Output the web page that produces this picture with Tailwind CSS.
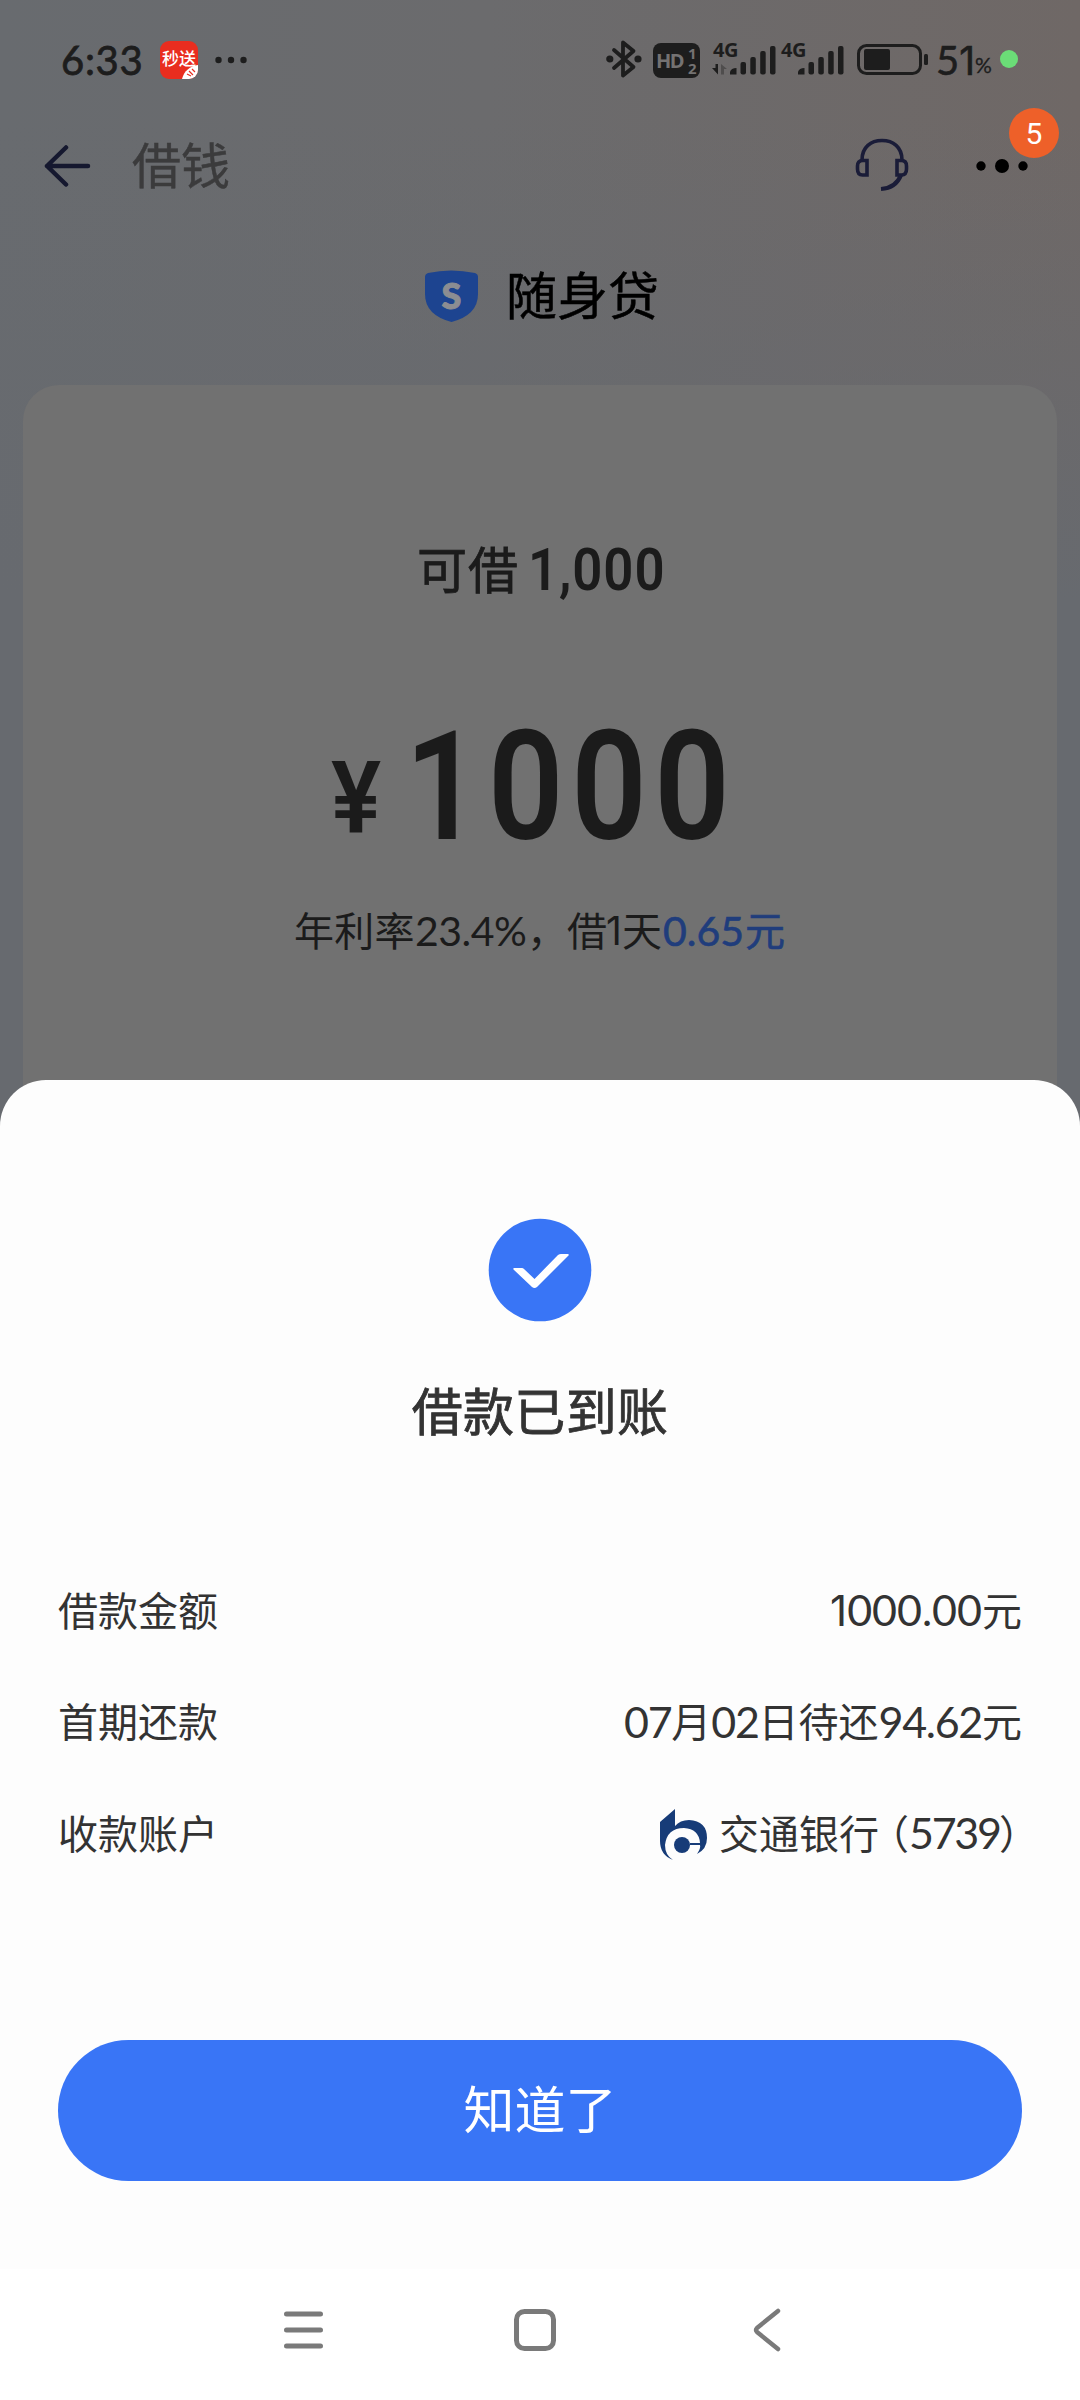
<!DOCTYPE html>
<html lang="zh-CN">
<head>
<meta charset="utf-8">
<title>借钱</title>
<script src="https://cdn.jsdelivr.net/npm/@tailwindcss/browser@4"></script>
</head>
<body class="bg-white">
<div class="relative w-[1080px] h-[2400px] overflow-hidden bg-[linear-gradient(180deg,transparent_0px,transparent_120px,#676a6f_600px),linear-gradient(90deg,#686b6f_0%,#6b6b6d_45%,#6f6866_100%)] font-['Lato','Noto_Sans_CJK_SC',sans-serif] text-[#333] flex flex-col">

  <!-- status bar -->
  <header class="h-[120px] shrink-0 flex items-center pl-[61px] text-[#1d1d1d]">
    <span class="w-[99px] text-[40px] leading-none tracking-[0.7px] [-webkit-text-stroke:0.8px_#1d1d1d]">6:33</span>
    <span class="relative w-[38px] h-[38px] rounded-[9px] bg-[#e92d1f] overflow-hidden">
      <span class="absolute left-[2px] top-[9px] w-[36px] text-[17px] leading-[17px] font-medium text-white whitespace-nowrap">秒送</span>
      <svg class="absolute right-0 bottom-0" width="16" height="15" viewBox="0 0 16 15"><path d="M0 15C2 7 8 2 16 1V9C15 12 13 15 9 15Z" fill="#fff"/><path d="M5 10l4 2M7 7l4 4M10 5l3 3" stroke="#e92d1f" stroke-width="1.200"/></svg>
    </span>
    <svg class="ml-[17px]" width="34" height="8" viewBox="0 0 34 8" fill="#1d1d1d"><circle cx="3.500" cy="4" r="3.200"/><circle cx="16" cy="4" r="3.200"/><circle cx="28.500" cy="4" r="3.200"/></svg>
    <svg class="ml-[357px] -mt-[2px]" width="36" height="40" viewBox="0 0 36 40" fill="none" stroke="#1d1d1d" stroke-width="3.800" stroke-linejoin="round" stroke-linecap="round"><path d="M8 11L27.500 28L17 36.500V3.500L27.500 12L8 29"/><circle cx="3.800" cy="20" r="1.700"/><circle cx="32" cy="20" r="1.700"/></svg>
    <span class="relative ml-[11px] w-[47px] h-[35px] rounded-[8px] bg-[#1d1d1d] text-[#747272] font-['Open_Sans'] font-bold">
      <span class="absolute left-[3px] top-[8px] text-[20px] leading-[20px] tracking-[-1.500px]">HD</span>
      <span class="absolute left-[35px] top-[3px] text-[15px] leading-[15px]">1</span>
      <span class="absolute left-[35px] top-[18px] text-[15px] leading-[15px]">2</span>
    </span>
    <span class="relative ml-[12px] w-[66px] h-[36px]">
      <span class="absolute left-[1px] top-[-1px] font-['Open_Sans'] text-[20px] leading-[18px] font-bold tracking-[-0.500px]">4G</span>
      <svg class="absolute left-0 top-0" width="66" height="36" viewBox="0 0 66 36" fill="#1d1d1d"><path d="M6 22V32.500L0 26H3.500V22Z"/><path d="M9 32.500V22L15 27H12V32.500Z" fill="#4f4d4d"/><path d="M18 32.500V30Q19 26 24.500 26V32.500Z"/><rect x="28.500" y="20" width="5.500" height="12.500" rx="2"/><rect x="38.300" y="15" width="5.500" height="17.500" rx="2"/><rect x="48.200" y="9" width="5.500" height="23.500" rx="2"/><rect x="58" y="4" width="5.500" height="28.500" rx="2"/></svg>
    </span>
    <span class="relative ml-[2px] w-[66px] h-[36px]">
      <span class="absolute left-[1px] top-[-1px] font-['Open_Sans'] text-[20px] leading-[18px] font-bold tracking-[-0.500px]">4G</span>
      <svg class="absolute left-0 top-0" width="66" height="36" viewBox="0 0 66 36" fill="#1d1d1d"><path d="M18 32.500V30Q19 26 24.500 26V32.500Z"/><rect x="28.500" y="20" width="5.500" height="12.500" rx="2"/><rect x="38.300" y="15" width="5.500" height="17.500" rx="2"/><rect x="48.200" y="9" width="5.500" height="23.500" rx="2"/><rect x="58" y="4" width="5.500" height="28.500" rx="2"/></svg>
    </span>
    <svg class="ml-[11px]" width="72" height="32" viewBox="0 0 72 32"><rect x="1.500" y="1.500" width="62" height="28" rx="8" fill="none" stroke="#1d1d1d" stroke-width="3"/><rect x="7" y="5" width="26" height="21" rx="2" fill="#1d1d1d"/><rect x="67" y="10" width="4" height="11" rx="1.500" fill="#1d1d1d"/></svg>
    <span class="ml-[7px] w-[39px] flex items-center text-[40px] leading-none [-webkit-text-stroke:0.600px_#1d1d1d]"><span>5</span><span class="font-['Inter'] text-[39px]">1</span></span>
    <span class="w-[25px] mt-[9px] text-[21px] leading-none [-webkit-text-stroke:0.300px_#1d1d1d]">%</span>
    <span class="w-[18px] h-[18px] rounded-full bg-[#6bdd77] -mt-[2px]"></span>
  </header>

  <!-- app bar -->
  <nav class="h-[92px] shrink-0 flex items-center pl-[44px]">
    <svg width="47" height="42" viewBox="0 0 47 42" fill="none" stroke="#15182f" stroke-width="4.500" stroke-linecap="round" stroke-linejoin="round"><path d="M22 2.500L3 21L22 39.500M3 21H44"/></svg>
    <span class="ml-[41px] -mt-[2px] w-[100px] text-[49px] leading-[60px] text-[#3b3b3c] [-webkit-text-stroke:0.500px_#3b3b3c]">借钱</span>
    <svg class="ml-[623px] -mt-[2px]" width="54" height="54" viewBox="0 0 54 54" fill="none" stroke="#1a1c38" stroke-width="3.600"><path d="M7 22C7 9 16 2.500 27 2.500S47 9 47 22"/><path d="M12 22.500H7.500Q2.500 22.500 2.500 28V31Q2.500 37 7.500 37H12Z"/><path d="M42 22.500H46.500Q51.500 22.500 51.500 28V31Q51.500 37 46.500 37H42Z"/><path d="M46 37Q41 50 26 51" stroke-width="4.200"/></svg>
    <span class="relative ml-[67px] w-[52px] h-[14px]">
      <svg class="absolute left-0 top-0" width="52" height="14" viewBox="0 0 52 14"><circle cx="5" cy="7" r="4.700"/><circle cx="26" cy="7" r="7"/><circle cx="47" cy="7" r="4.700"/></svg>
      <span class="absolute left-[33px] top-[-51px] w-[50px] h-[50px] rounded-full bg-[#ee6029] text-white font-['Roboto'] text-[30px] leading-[52px] text-center">5</span>
    </span>
  </nav>

  <!-- product title -->
  <div class="h-[173px] shrink-0 flex items-start pt-[54px] pl-[425px]">
    <svg class="mt-[4px]" width="53" height="52" viewBox="0 0 53 52"><path d="M3 3Q26 -2 50 3Q53 4 53 7V24Q53 45 26.500 52Q0 45 0 24V7Q0 4 3 3Z" fill="#1d4490"/><text x="26.500" y="38.500" text-anchor="middle" font-family="Lato" font-weight="900" font-size="36" fill="#8b8d92" stroke="#8b8d92" stroke-width="1" stroke-linejoin="round">S</text></svg>
    <span class="ml-[28px] text-[51px] leading-[60px] text-black [-webkit-text-stroke:0.500px_#000]">随身贷</span>
  </div>

  <!-- loan card -->
  <main class="ml-[23px] w-[1034px] h-[800px] shrink-0 rounded-t-[36px] bg-[#717171] text-[#1b1b1b]">
    <div class="pt-[154px] pl-[394px] flex items-center h-[215px]">
      <span class="w-[111px] text-[50px] leading-[60px] tracking-[1px] [-webkit-text-stroke:0.800px_#1b1b1b]">可借</span>
      <span class="pt-[1px] origin-left scale-x-[0.880] font-['Roboto'] font-semibold text-[60px] leading-[60px] tracking-[1px]">1,000</span>
    </div>
    <div class="mt-[115px] pl-[308px] h-[140px] flex items-start">
      <span class="w-[74px] pt-[33px] font-['Roboto'] font-semibold text-[100px] leading-[100px] origin-left scale-x-[0.940]">¥</span>
      <span class="pt-[2px] origin-left scale-x-[0.870] font-['Roboto'] font-semibold text-[152px] leading-[140px] tracking-[8.700px]">1000</span>
    </div>
    <p class="mt-[44px] pl-[271px] h-[64px] flex items-center text-[40px] leading-[60px] whitespace-nowrap">
      <span class="w-[121px] tracking-[0.300px]">年利率</span><span class="w-[112px] text-[41px] tracking-[-0.500px]">23.4%</span><span class="w-[40px]">，</span><span class="w-[39px]">借</span><span class="w-[16px] font-['Inter'] text-[39px] tracking-[-1px]">1</span><span class="w-[41px]">天</span><span class="text-[#203d7c] [-webkit-text-stroke:0.600px_#203d7c] w-[82px] text-[41px]">0.65</span><span class="text-[#203d7c] [-webkit-text-stroke:0.600px_#203d7c]">元</span>
    </p>
  </main>

  <!-- result sheet -->
  <section class="absolute left-0 top-[1080px] w-[1080px] h-[1320px] rounded-t-[46px] bg-[#fdfdfd] flex flex-col overflow-hidden">
    <svg class="mt-[138px] mx-auto shrink-0" width="104" height="104" viewBox="0 0 104 104"><circle cx="52" cy="52" r="51.300" fill="#3975f6"/><path d="M26 50H34Q35 50 36 51L46.500 61L70 37Q71.500 36 73 36H79.500Q81.500 36 80.500 37.500L49 69Q46.500 71 44 69L25.500 51.500Q25 50 26 50Z" fill="#fff"/></svg>
    <h1 class="mt-[60px] text-center text-[51px] leading-[60px] tracking-[0.300px] [-webkit-text-stroke:0.800px_#333]">借款已到账</h1>
    <dl class="mt-[113px] px-[58px] text-[40px]">
      <div class="h-[111px] flex items-center justify-between"><dt>借款金额</dt><dd class="flex items-center"><span class="font-['Inter'] text-[42px]">1</span><span class="text-[43px]">000.00</span><span>元</span></dd></div>
      <div class="h-[112px] flex items-center justify-between"><dt>首期还款</dt><dd class="flex items-center"><span class="text-[43px] tracking-[-1.300px]">07</span>月<span class="text-[43px] tracking-[-1.300px]">02</span>日待还<span class="text-[43px] tracking-[-1.300px]">94.62</span>元</dd></div>
      <div class="h-[111px] flex items-center justify-between"><dt>收款账户</dt><dd class="flex items-center">
        <svg class="mr-[11px] mt-[2px]" width="48" height="51" viewBox="0 0 48 51" fill="#173c78"><path d="M0 13L15 0V17Q20 11 29 11Q47 12 47 29Q47 40 37 45Q41 39 40 36H30V34H40Q39 20 24 19Q7 19 5 36Q5 46 13 51Q0 46 0 32Z"/><circle cx="22" cy="36" r="8"/></svg>
        <span class="w-[160px]">交通银行</span><span class="ml-[10px] w-[20px] [font-feature-settings:'halt']">（</span><span class="text-[43px] w-[90px] tracking-[-2.300px]">5739</span><span class="w-[20px] mr-[3px] [font-feature-settings:'halt']">）</span></dd></div>
    </dl>
    <button class="mt-[151px] mx-[58px] h-[141px] shrink-0 rounded-full bg-[#3975f6] text-white text-[51px] leading-[60px] pb-[2px]">知道了</button>
    <!-- system navigation -->
    <footer class="absolute left-0 bottom-0 w-full h-[131px] bg-white flex items-center pl-[283px] pb-[10px]">
      <svg width="41" height="40" viewBox="0 0 41 40" stroke="#7a7a7a" stroke-width="5" stroke-linecap="round"><path d="M3.500 4H37.500M3.500 20H37.500M3.500 36H37.500"/></svg>
      <svg class="ml-[190px]" width="42" height="42" viewBox="0 0 42 42"><rect x="2.500" y="2.500" width="37" height="37" rx="8" fill="none" stroke="#7a7a7a" stroke-width="5"/></svg>
      <svg class="ml-[197px]" width="29" height="44" viewBox="0 0 29 44" fill="none" stroke="#7a7a7a" stroke-width="4.500" stroke-linecap="round" stroke-linejoin="round"><path d="M25 3L4 20Q2 22 4 24L25 41"/></svg>
    </footer>
  </section>
</div>
</body>
</html>
